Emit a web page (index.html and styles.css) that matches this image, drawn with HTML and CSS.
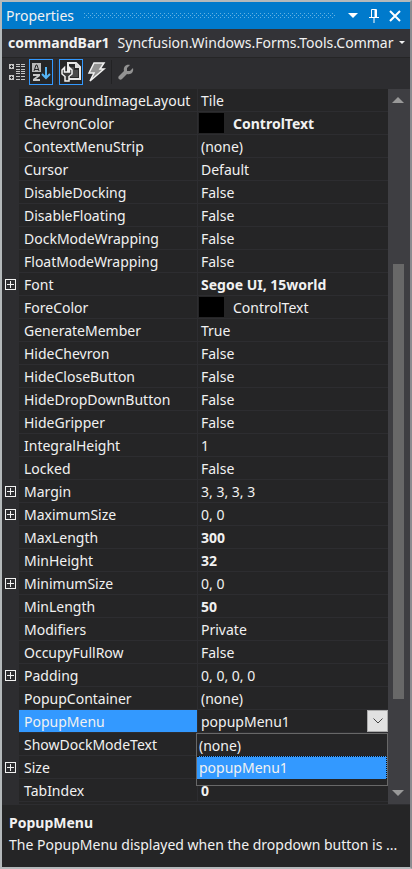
FILE: index.html
```html
<!DOCTYPE html>
<html lang="en">
<head>
<meta charset="utf-8">
<meta name="viewport" content="width=device-width, initial-scale=1">
<title>Properties</title>
<link rel="stylesheet" href="styles.css">
</head>
<body>
<main class="panel">
  <header class="titlebar">
    <h1>Properties</h1>
    <span class="grip"></span>
    <button type="button" aria-label="Window position"><svg width="10" height="6" viewBox="0 0 10 6"><path d="M0 0h10L5 5z" fill="#fff"/></svg></button>
    <button type="button" aria-label="Auto hide"><svg width="10" height="14" viewBox="0 0 10 14" fill="none" stroke="#fff"><path d="M2.500 8.500V.5h5v8M0 8.500h10M5 9v5"/><path d="M6.500 1v8" stroke-width="2"/></svg></button>
    <button type="button" aria-label="Close"><svg width="12" height="12" viewBox="0 0 12 12"><path d="M1 1l10 10M11 1L1 11" stroke="#fff" stroke-width="2"/></svg></button>
  </header>
  <div class="object">
    <strong>commandBar1</strong>
    <span class="type">Syncfusion.Windows.Forms.Tools.Commar</span>
    <button type="button" aria-label="Choose object"><svg width="6" height="4" viewBox="0 0 6 4"><path d="M0 0h6L3 3z" fill="#f1f1f1"/></svg></button>
  </div>
  <div class="toolbar">
    <button type="button" aria-label="Categorized"><svg width="18" height="18" viewBox="0 0 18 18"><path fill="#c5c5c5" d="M1 1h5v5H1zM1 12h5v5H1zM8 1h4v1H8zM13 1h4v1h-4zM8 3h4v1H8zM13 3h4v1h-4zM8 6h4v1H8zM13 6h4v1h-4zM8 8h4v1H8zM13 8h4v1h-4zM8 10h4v1H8zM13 10h4v1h-4zM8 13h4v1H8zM13 13h4v1h-4zM8 16h4v1H8zM13 16h4v1h-4z"/><path stroke="#2d2d30" d="M2 3.500h3M3.500 2v3M2 14.500h3M3.500 13v3"/></svg></button>
    <button type="button" class="on" aria-label="Alphabetical" aria-pressed="true"><svg width="20" height="20" viewBox="0 0 20 20"><path fill="#b9b9b9" d="M1 1h9v9H1z"/><path d="M3 9l2-6h1l2 6M4 7.500h3" fill="none" stroke="#252526"/><path d="M2 12h7v2l-4 3h4v2H2v-2l4-3H2z" fill="#c8c8c8"/><path d="M15 5v11M11 12l4 4 4-4" fill="none" stroke="#55b4f5" stroke-width="2"/></svg></button>
    <span class="sep"></span>
    <button type="button" class="on" aria-label="Properties" aria-pressed="true"><svg width="20" height="20" viewBox="0 0 20 20"><path d="M7 1h8l4 4v12H7z" fill="#292929" stroke="#e8e8e8" stroke-width="2"/><path d="M14 1v5h5z" fill="#ddd"/><path d="M10 5h3v3h4v7h-7z" fill="#4a4a4a"/><path d="M3.500 5.500L1 8v4l3 2.500V19h4v-4.500l3-2.500V8L8.500 5.500V10h-5z" fill="#383838" stroke="#f1f1f1" stroke-width="1.500"/></svg></button>
    <button type="button" class="events" aria-label="Events"><svg width="20" height="20" viewBox="0 0 20 20"><path d="M8 1h10l-4 6h4L4 19l4-8H3z" fill="#929292" stroke="#f1f1f1" stroke-width="1.500"/></svg></button>
    <span class="sep"></span>
    <button type="button" aria-label="Property pages"><svg width="18" height="18" viewBox="0 0 18 18"><path d="M13 2l-3 3v3h3l3-3c1 4-2 7-6 6l-5 5c-2 2-5-1-3-3l5-5C6 4 9 1 13 2z" fill="#929292"/></svg></button>
  </div>
  <div class="body">
    <div class="grid">
    <table>
      <colgroup><col class="gutter"><col class="name"><col></colgroup>
      <tbody>
        <tr><td></td><th scope="row">BackgroundImageLayout</th><td>Tile</td></tr>
        <tr><td></td><th scope="row">ChevronColor</th><td><b class="color">ControlText</b></td></tr>
        <tr><td></td><th scope="row">ContextMenuStrip</th><td>(none)</td></tr>
        <tr><td></td><th scope="row">Cursor</th><td>Default</td></tr>
        <tr><td></td><th scope="row">DisableDocking</th><td>False</td></tr>
        <tr><td></td><th scope="row">DisableFloating</th><td>False</td></tr>
        <tr><td></td><th scope="row">DockModeWrapping</th><td>False</td></tr>
        <tr><td></td><th scope="row">FloatModeWrapping</th><td>False</td></tr>
        <tr><td><button type="button" class="expand" aria-label="Expand Font"></button></td><th scope="row">Font</th><td><b>Segoe UI, 15world</b></td></tr>
        <tr><td></td><th scope="row">ForeColor</th><td><span class="color">ControlText</span></td></tr>
        <tr><td></td><th scope="row">GenerateMember</th><td>True</td></tr>
        <tr><td></td><th scope="row">HideChevron</th><td>False</td></tr>
        <tr><td></td><th scope="row">HideCloseButton</th><td>False</td></tr>
        <tr><td></td><th scope="row">HideDropDownButton</th><td>False</td></tr>
        <tr><td></td><th scope="row">HideGripper</th><td>False</td></tr>
        <tr><td></td><th scope="row">IntegralHeight</th><td>1</td></tr>
        <tr><td></td><th scope="row">Locked</th><td>False</td></tr>
        <tr><td><button type="button" class="expand" aria-label="Expand Margin"></button></td><th scope="row">Margin</th><td>3, 3, 3, 3</td></tr>
        <tr><td><button type="button" class="expand" aria-label="Expand MaximumSize"></button></td><th scope="row">MaximumSize</th><td>0, 0</td></tr>
        <tr><td></td><th scope="row">MaxLength</th><td><b>300</b></td></tr>
        <tr><td></td><th scope="row">MinHeight</th><td><b>32</b></td></tr>
        <tr><td><button type="button" class="expand" aria-label="Expand MinimumSize"></button></td><th scope="row">MinimumSize</th><td>0, 0</td></tr>
        <tr><td></td><th scope="row">MinLength</th><td><b>50</b></td></tr>
        <tr><td></td><th scope="row">Modifiers</th><td>Private</td></tr>
        <tr><td></td><th scope="row">OccupyFullRow</th><td>False</td></tr>
        <tr><td><button type="button" class="expand" aria-label="Expand Padding"></button></td><th scope="row">Padding</th><td>0, 0, 0, 0</td></tr>
        <tr><td></td><th scope="row">PopupContainer</th><td>(none)</td></tr>
        <tr class="selected"><td></td><th scope="row"><label for="popup-menu">PopupMenu</label></th><td>
          <div class="editor">
            <input id="popup-menu" type="text" value="popupMenu1">
            <button type="button" aria-label="Open list"><svg width="10" height="6" viewBox="0 0 10 6"><path d="M.5.5L5 5 9.500.5" fill="none" stroke="#444"/></svg></button>
            <ul class="menu" role="listbox" aria-label="PopupMenu">
              <li role="option">(none)</li>
              <li role="option" aria-selected="true">popupMenu1</li>
            </ul>
          </div></td></tr>
        <tr><td></td><th scope="row">ShowDockModeText</th><td></td></tr>
        <tr><td><button type="button" class="expand" aria-label="Expand Size"></button></td><th scope="row">Size</th><td></td></tr>
        <tr><td></td><th scope="row">TabIndex</th><td><b>0</b></td></tr>
      </tbody>
    </table>
    </div>
    <div class="scrollbar">
      <button type="button" aria-label="Scroll up"><svg width="12" height="6" viewBox="0 0 12 6"><path d="M0 6h12L6 0z" fill="#999"/></svg></button>
      <div class="track"><div class="thumb"></div></div>
      <button type="button" aria-label="Scroll down"><svg width="12" height="6" viewBox="0 0 12 6"><path d="M0 0h12L6 6z" fill="#999"/></svg></button>
    </div>
  </div>
  <footer class="help">
    <h2>PopupMenu</h2>
    <p>The PopupMenu displayed when the dropdown button is ...</p>
  </footer>
</main>
</body>
</html>
```
FILE: styles.css
```css
* { box-sizing: border-box; }

body {
  margin: 0;
  background: #252526;
  color: #f1f1f1;
  font: 14px/22px "Noto Sans", "Open Sans", sans-serif;
}

button {
  display: flex;
  align-items: center;
  justify-content: center;
  flex: none;
  margin: 0;
  padding: 0;
  border: 0;
  background: none;
  color: inherit;
}

.panel {
  display: flex;
  flex-direction: column;
  min-height: 100vh;
  border: 2px solid #b4b9bb;
  border-right-color: #8c8c90;
}

.titlebar {
  display: flex;
  align-items: center;
  height: 27px;
  padding: 0 5px 0 4px;
  background: #007acc;
}

.titlebar h1 {
  margin: 0;
  font-size: 14px;
  font-weight: 400;
}

.grip {
  flex: 1;
  height: 5px;
  margin: 0 6px 0 10px;
  background:
    linear-gradient(#66b3e2, #66b3e2) 0 0 / 1px 1px no-repeat,
    conic-gradient(from 270deg at 1px 1px, #66b3e2 90deg, transparent 0) 0 0 / 4px 4px,
    conic-gradient(from 270deg at 1px 1px, #66b3e2 90deg, transparent 0) 2px 2px / 4px 4px;
}

.titlebar button { width: 21px; height: 21px; }

.object {
  display: flex;
  align-items: center;
  gap: 8px;
  height: 29px;
  padding: 0 4px 0 6px;
  border-bottom: 1px solid #252526;
  background: #333337;
}

.type {
  flex: 1;
  min-width: 0;
  white-space: nowrap;
}

.object button { width: 8px; height: 20px; }

.toolbar {
  display: flex;
  align-items: center;
  height: 31px;
  padding: 0 3px 3px;
  background: #2d2d30;
}

.toolbar button { width: 24px; height: 26px; }
.toolbar .on { border: 1px solid #3399ff; background: #252526; }
.toolbar .events { margin-left: 1px; }

.sep {
  width: 1px;
  height: 24px;
  margin: 0 2px 0 3px;
  background: #222224;
}

.body {
  display: flex;
  align-items: stretch;
  background: #252526;
}

.grid {
  flex: 1;
  min-width: 0;
  padding-bottom: 2px;
  background: linear-gradient(90deg, #2d2d30 17px, transparent 17px);
}

table {
  width: 100%;
  border-spacing: 0;
  table-layout: fixed;
}

.gutter { width: 17px; }
.name { width: 179px; }

td, th {
  height: 23px;
  padding: 2px 0 0 3px;
  border-bottom: 1px solid #2d2d30;
  text-align: left;
  font-weight: 400;
  line-height: 20px;
  white-space: nowrap;
}

th { padding-left: 5px; border-right: 1px solid #2d2d30; }

td:first-child { padding-top: 0; background: #2d2d30; }

.expand {
  width: 11px;
  height: 11px;
  border: 1px solid #f1f1f1;
  background:
    linear-gradient(#f1f1f1, #f1f1f1) center / 7px 1px no-repeat,
    linear-gradient(#f1f1f1, #f1f1f1) center / 1px 7px no-repeat;
}

.color { display: flex; align-items: center; gap: 9px; }

.color::before {
  content: "";
  width: 25px;
  height: 20px;
  margin: -2px 0 0 -2px;
  background: #000;
}

.selected th { background: #3399ff; }
.selected label { display: block; }
.selected td { padding-top: 0; }

.editor { position: relative; display: flex; height: 22px; }

.editor input {
  flex: 1;
  min-width: 0;
  padding: 2px 0 0;
  border: 0;
  outline: 0;
  background: none;
  color: inherit;
  font: inherit;
}

.editor button {
  width: 21px;
  height: 22px;
  border: 1px solid #ababab;
  background: #e1e1e1;
}

.menu {
  position: absolute;
  z-index: 1;
  top: 23px;
  right: 0;
  left: -5px;
  margin: 0;
  padding: 0 0 6px;
  border: 1px solid #686868;
  background: #252526;
  list-style: none;
}

.menu li { height: 22px; padding-left: 2px; line-height: 23px; }

.menu li[aria-selected="true"] {
  height: 23px;
  border: 1px dotted #111;
  border-width: 1px 1px 0 0;
  background: #3399ff;
  line-height: 22px;
}

.scrollbar {
  display: flex;
  flex: none;
  flex-direction: column;
  width: 22px;
  background: #3e3e42;
}

.scrollbar button { width: 20px; height: 22px; }

.track {
  display: flex;
  flex: 1;
  flex-direction: column;
  justify-content: flex-end;
  padding: 0 6px 83px 5px;
}

.thumb { height: 74%; background: #686868; }

.help {
  flex: 1;
  padding: 7px 7px 8px;
  border-top: 1px solid #2d2d30;
  background: #252526;
}

.help h2, .help p {
  margin: 0;
  font-size: 14px;
  line-height: 22px;
  white-space: nowrap;
}
```
